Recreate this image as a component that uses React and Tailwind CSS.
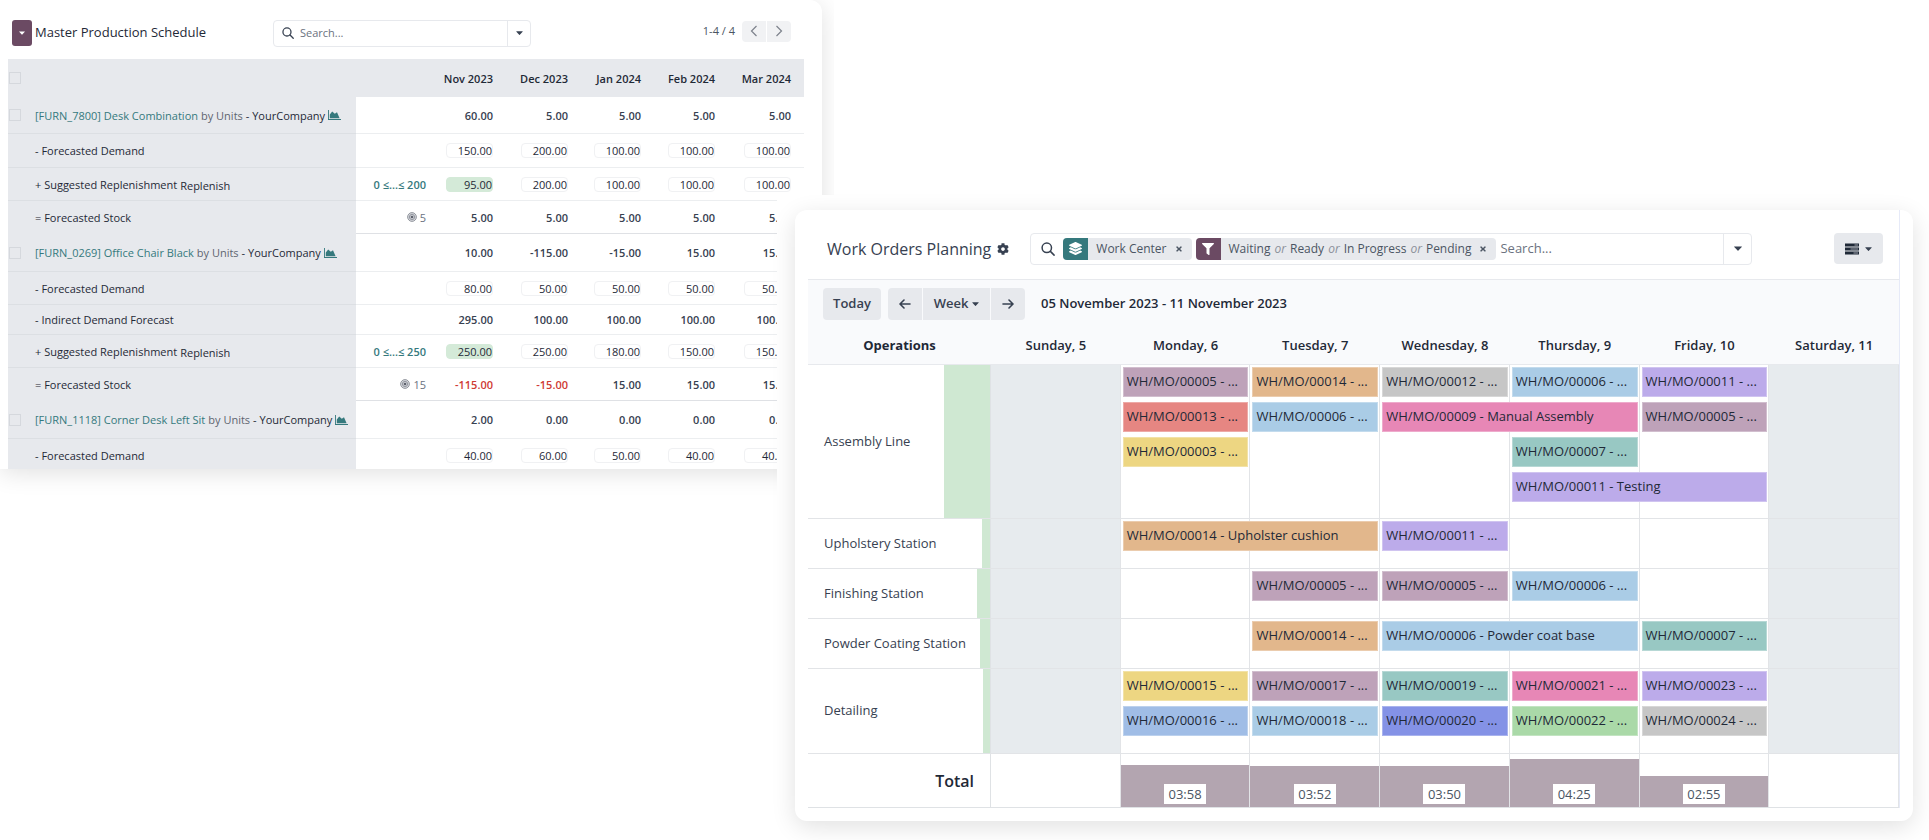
import { useState } from 'react'
import { FaCog, FaFilter, FaTimes, FaLayerGroup } from 'react-icons/fa'

const MONTHS = ['Nov 2023', 'Dec 2023', 'Jan 2024', 'Feb 2024', 'Mar 2024']

// kind: product | input | total
const SCHEDULE = [
  { kind:'product', h:'h-[37px]', name:'[FURN_7800] Desk Combination', values:['60.00','5.00','5.00','5.00','5.00'] },
  { kind:'input', h:'h-[34px]', name:'- Forecasted Demand', values:['150.00','200.00','100.00','100.00','100.00'] },
  { kind:'input', h:'h-[33px]', name:'+ Suggested Replenishment', replenish:true, range:'0 ≤...≤ 200', values:['95.00','200.00','100.00','100.00','100.00'] },
  { kind:'total', h:'h-[33px]', name:'= Forecasted Stock', target:'5', last:true, values:['5.00','5.00','5.00','5.00','5.00'] },
  { kind:'product', h:'h-[38px]', name:'[FURN_0269] Office Chair Black', values:['10.00','-115.00','-15.00','15.00','15.00'] },
  { kind:'input', h:'h-[33px]', name:'- Forecasted Demand', values:['80.00','50.00','50.00','50.00','50.00'] },
  { kind:'total', h:'h-[30px]', name:'- Indirect Demand Forecast', values:['295.00','100.00','100.00','100.00','100.00'] },
  { kind:'input', h:'h-[33px]', name:'+ Suggested Replenishment', replenish:true, range:'0 ≤...≤ 250', values:['250.00','250.00','180.00','150.00','150.00'] },
  { kind:'total', h:'h-[33px]', name:'= Forecasted Stock', target:'15', last:true, values:['-115.00','-15.00','15.00','15.00','15.00'] },
  { kind:'product', h:'h-[38px]', name:'[FURN_1118] Corner Desk Left Sit', values:['2.00','0.00','0.00','0.00','0.00'] },
  { kind:'input', h:'h-[34px]', name:'- Forecasted Demand', values:['40.00','60.00','50.00','40.00','40.00'] },
]

const DAYS = ['Sunday, 5', 'Monday, 6', 'Tuesday, 7', 'Wednesday, 8', 'Thursday, 9', 'Friday, 10', 'Saturday, 11']

const mauve = 'bg-[#bea2b9]', orange = 'bg-[#e2b78c]', gray = 'bg-[#c6c6c6]', sky = 'bg-[#aacce6]', violet = 'bg-[#bcabea]'
const red = 'bg-[#e68682]', pink = 'bg-[#e787b6]', yellow = 'bg-[#edd682]', teal = 'bg-[#98c8c3]', blue = 'bg-[#a0bde6]', indigo = 'bg-[#8492e6]', green = 'bg-[#aad9a8]'

const STATIONS = [
  { name:'Assembly Line', h:'h-[154px]', load:28, tasks:[
    ['WH/MO/00005 - ...', mauve, 'col-start-2 row-start-1'],
    ['WH/MO/00014 - ...', orange, 'col-start-3 row-start-1'],
    ['WH/MO/00012 - ...', gray, 'col-start-4 row-start-1'],
    ['WH/MO/00006 - ...', sky, 'col-start-5 row-start-1'],
    ['WH/MO/00011 - ...', violet, 'col-start-6 row-start-1'],
    ['WH/MO/00013 - ...', red, 'col-start-2 row-start-2'],
    ['WH/MO/00006 - ...', sky, 'col-start-3 row-start-2'],
    ['WH/MO/00009 - Manual Assembly', pink, 'col-start-4 col-span-2 row-start-2'],
    ['WH/MO/00005 - ...', mauve, 'col-start-6 row-start-2'],
    ['WH/MO/00003 - ...', yellow, 'col-start-2 row-start-3'],
    ['WH/MO/00007 - ...', teal, 'col-start-5 row-start-3'],
    ['WH/MO/00011 - Testing', violet, 'col-start-5 col-span-2 row-start-4'],
  ] },
  { name:'Upholstery Station', h:'h-[50px]', load:5, tasks:[
    ['WH/MO/00014 - Upholster cushion', orange, 'col-start-2 col-span-2 row-start-1'],
    ['WH/MO/00011 - ...', violet, 'col-start-4 row-start-1'],
  ] },
  { name:'Finishing Station', h:'h-[50px]', load:8, tasks:[
    ['WH/MO/00005 - ...', mauve, 'col-start-3 row-start-1'],
    ['WH/MO/00005 - ...', mauve, 'col-start-4 row-start-1'],
    ['WH/MO/00006 - ...', sky, 'col-start-5 row-start-1'],
  ] },
  { name:'Powder Coating Station', h:'h-[50px]', load:6, tasks:[
    ['WH/MO/00014 - ...', orange, 'col-start-3 row-start-1'],
    ['WH/MO/00006 - Powder coat base', sky, 'col-start-4 col-span-2 row-start-1'],
    ['WH/MO/00007 - ...', teal, 'col-start-6 row-start-1'],
  ] },
  { name:'Detailing', h:'h-[85px]', load:4, tasks:[
    ['WH/MO/00015 - ...', yellow, 'col-start-2 row-start-1'],
    ['WH/MO/00017 - ...', mauve, 'col-start-3 row-start-1'],
    ['WH/MO/00019 - ...', teal, 'col-start-4 row-start-1'],
    ['WH/MO/00021 - ...', pink, 'col-start-5 row-start-1'],
    ['WH/MO/00023 - ...', violet, 'col-start-6 row-start-1'],
    ['WH/MO/00016 - ...', blue, 'col-start-2 row-start-2'],
    ['WH/MO/00018 - ...', sky, 'col-start-3 row-start-2'],
    ['WH/MO/00020 - ...', indigo, 'col-start-4 row-start-2'],
    ['WH/MO/00022 - ...', green, 'col-start-5 row-start-2'],
    ['WH/MO/00024 - ...', gray, 'col-start-6 row-start-2'],
  ] },
]

const TOTALS = [null, ['03:58', 80], ['03:52', 78], ['03:50', 77], ['04:25', 90], ['02:55', 58], null]

const Caret = ({ className }) => <svg viewBox="0 0 10 6" className={className} fill="currentColor"><path d="M.6.4h8.8a.4.4 0 0 1 .3.7L5.5 5.6a.7.7 0 0 1-1 0L.3 1.1A.4.4 0 0 1 .6.4z" /></svg>
const SearchIcon = ({ className }) => <svg viewBox="0 0 14 14" className={className} fill="none" stroke="currentColor" strokeWidth="1.5" strokeLinecap="round"><circle cx="5.8" cy="5.8" r="4.7" /><path d="M9.4 9.4l3.7 3.7" /></svg>
const Chevron = ({ d }) => <svg viewBox="0 0 8 12" className="h-3 w-2" fill="none" stroke="currentColor" strokeWidth="1.2"><path d={d} /></svg>
const Arrow = ({ d }) => <svg viewBox="0 0 12 10" className="h-[10px] w-3" fill="none" stroke="currentColor" strokeWidth="1.6" strokeLinecap="round" strokeLinejoin="round"><path d={d} /></svg>
const AreaChart = () => <svg viewBox="0 0 13 10" className="h-[10px] w-[13px]" fill="currentColor"><path d="M0 0h.9v9.1H13v.9H0z" /><path d="M1.8 8.3V4.6L4.2 1.5l2.6 2.3 2.2-1.6L11.6 8.3z" /></svg>
const Target = () => <svg viewBox="0 0 10 10" className="h-[10px] w-[10px] shrink-0" fill="none" stroke="#8b8e97"><circle cx="5" cy="5" r="4.4" strokeWidth=".9" fill="#d3d5da" /><circle cx="5" cy="5" r="2.6" strokeWidth=".9" /><circle cx="5" cy="5" r="1.3" fill="#5d616c" stroke="none" /></svg>
const Tasks = () => (
  <svg viewBox="0 0 14 12" className="h-3 w-[14px]" fill="#1f2937">
    <path d="M0 .5h14v3H0zM0 4.5h14v3H0zM0 8.5h14v3H0z" />
    <path fill="#9ca0a9" d="M9.5 1.5H13v1H9.5zM5.5 5.5H13v1H5.5zM8.5 9.5H13v1H8.5z" />
  </svg>
)

function ScheduleRow({ row }) {
  const { kind, h, name, replenish, range, target, last, values } = row
  return (
    <tr className={h}>
      <td className={`bg-[#e7e9ed] pl-px align-middle ${last?'':'border-b border-[#dcdfe3]'}`}>
        {kind==='product' && <input type="checkbox" aria-label={name} className="block h-3 w-3 appearance-none border border-[#d5d8dd]" />}
      </td>
      <th scope="row" className={`bg-[#e7e9ed] text-left font-medium whitespace-nowrap text-[#1f2937] ${last?'':'border-b border-[#dcdfe3]'}`}>
        {kind==='product' ? (
          <span className="flex items-center gap-[3px]">
            <a href="#" className="text-[#35797d]">{name}</a>
            <span className="font-normal text-[#5f6570]">by Units</span>
            <span>- YourCompany</span>
            <a href="#" aria-label="Forecast report" className="text-[#35797d]"><AreaChart /></a>
          </span>
        ) : (
          <span className="flex items-center gap-[3px]">{name}{replenish && <button className="pt-[2px]">Replenish</button>}</span>
        )}
      </th>
      <td className={`border-b pr-[13px] text-right whitespace-nowrap ${last?'border-[#dfe1e5]':'border-[#eceef0]'}`}>
        {range && <button className="font-semibold text-[#35797d]">{range}</button>}
        {target && <span className="flex items-center justify-end gap-[3px] font-medium text-[#6b7280]"><Target />{target}</span>}
      </td>
      {values.map((v, i) => (
        <td key={i} className={`border-b pr-[13px] text-right ${last?'border-[#dfe1e5]':'border-[#eceef0]'}`}>
          {kind==='input'
            ? <input defaultValue={v} aria-label={`${name} ${MONTHS[i]}`} className={`ml-auto block h-[15px] w-[47px] rounded-sm border text-right font-medium text-[#1f2937] ${replenish && i===0?'border-[#d4ead8] bg-[#d4ead8]':'border-[#f0f1f3] bg-white'}`} />
            : <span className={`font-semibold ${target && v.startsWith('-')?'text-[#cf3a34]':'text-[#374151]'}`}>{v}</span>}
        </td>
      ))}
    </tr>
  )
}

function SchedulePanel() {
  return (
    <section className="col-start-1 col-end-3 row-start-1 row-end-3 overflow-hidden pr-3 pb-[10px]">
      <div className="rounded-tr-xl bg-white pr-[18px] pl-2 shadow-[0_4px_24px_rgba(0,0,0,0.12)]">
        <header className="flex h-[59px] items-center pt-[7px] pl-1">
          <button aria-label="Menu" className="flex h-[26px] w-5 items-center justify-center rounded-[3px] bg-[#6b4a63] text-white"><Caret className="h-1 w-[6px]" /></button>
          <h1 className="ml-[3px] w-[238px] text-[13px] whitespace-nowrap text-[#1f2937]">Master Production Schedule</h1>
          <div className="flex h-[27px] w-[258px] items-center rounded border border-[#e7e9ed] pl-2 text-[#374151]">
            <SearchIcon className="h-3 w-3" />
            <input aria-label="Search schedule" placeholder="Search..." className="ml-[6px] min-w-0 flex-1 text-[11px] placeholder:text-[#6b7280]" />
            <button aria-label="Search options" className="flex h-full w-[23px] items-center justify-center border-l border-[#e7e9ed]"><Caret className="h-1 w-[7px]" /></button>
          </div>
          <div className="mr-[13px] mb-1 ml-auto flex items-center">
            <span className="mr-[7px] text-[11px] font-medium text-[#4b5563]">1-4 / 4</span>
            <button aria-label="Previous" className="flex h-[21px] w-6 items-center justify-center rounded-l bg-[#f1f2f4] text-[#7d828c]"><Chevron d="M6.5 1L1.5 6l5 5" /></button>
            <button aria-label="Next" className="ml-px flex h-[21px] w-6 items-center justify-center rounded-r bg-[#f1f2f4] text-[#7d828c]"><Chevron d="M1.5 1l5 5-5 5" /></button>
          </div>
        </header>
        <div className="overflow-hidden">
          <table className="-mb-1 w-full table-fixed border-separate border-spacing-0 text-[11px] leading-[13px]">
            <colgroup>
              <col className="w-[27px]" /><col className="w-[321px]" /><col className="w-[83px]" /><col className="w-[67px]" />
              <col className="w-[75px]" /><col className="w-[73px]" /><col className="w-[74px]" /><col className="w-[76px]" />
            </colgroup>
            <thead>
              <tr className="h-[38px] bg-[#e7e9ed] text-[#1f2937]">
                <td className="pl-px"><input type="checkbox" aria-label="Select all" className="block h-3 w-3 appearance-none border border-[#d5d8dd]" /></td>
                <td /><td />
                {MONTHS.map(m => <th key={m} scope="col" className="pr-[13px] text-right font-semibold whitespace-nowrap">{m}</th>)}
              </tr>
            </thead>
            <tbody>{SCHEDULE.map((row, i) => <ScheduleRow key={i} row={row} />)}</tbody>
          </table>
        </div>
      </div>
    </section>
  )
}

function Chip({ icon, color, children }) {
  return (
    <div className="flex h-[22px] shrink-0 items-center overflow-hidden rounded bg-[#e7e9ed] text-xs font-medium whitespace-nowrap text-[#4b5563]">
      <span className={`flex h-full w-[25px] items-center justify-center text-white ${color}`}>{icon}</span>
      <span className="flex gap-1 px-2">{children}</span>
      <button aria-label="Remove" className="pr-[9px]"><FaTimes size={8} /></button>
    </div>
  )
}

const Or = () => <i className="font-normal text-[#8b909a]">or</i>

function StationRow({ station }) {
  return (
    <div className={`flex border-b border-[#e2e4e7] ${station.h}`}>
      <div className="flex w-[183px] shrink-0 items-center justify-between border-r border-[#dfe2e5] pl-4 font-medium whitespace-nowrap text-[#374151]">
        <span className="w-0">{station.name}</span>
        <div className="h-full bg-[#cfe8d2]" style={{ width:`${station.load}%` }} />
      </div>
      <div className="grid flex-1">
        <div className="col-start-1 row-start-1 grid grid-cols-7">
          {DAYS.map((d, i) => <div key={d} className={`border-r border-[#e2e4e7] ${i===0||i===6?'bg-[#e7ebee]':''}`} />)}
        </div>
        <div className="col-start-1 row-start-1 grid auto-rows-[30px] grid-cols-7 gap-y-[5px] pt-[2px]">
          {station.tasks.map(([label, color, place]) => (
            <button key={place} className={`mr-[2px] ml-[2px] truncate border border-white/30 px-[3px] text-left font-medium text-[#1f2937] ${color} ${place}`}>{label}</button>
          ))}
        </div>
      </div>
    </div>
  )
}

function PlanningPanel({ scale, setScale }) {
  return (
    <section className="col-start-2 col-end-4 row-start-2 row-end-4 bg-white pt-[15px] pr-4 pb-5 pl-[18px]">
      <div className="rounded-xl bg-white px-[13px] pb-[13px] text-[13px] shadow-[0_6px_24px_rgba(0,0,0,0.12)]">
        <div className="border-r border-[#e6eaf8]">
          <header className="flex h-[69px] items-center pt-2 pr-4 pl-[19px]">
            <h2 className="text-base whitespace-nowrap text-[#374151]">Work Orders Planning</h2>
            <button aria-label="Settings" className="ml-[6px] text-[#374151]"><FaCog size={12} /></button>
            <div className="ml-[21px] flex h-8 w-[722px] items-center gap-1 rounded border border-[#e7e9ed] pl-[10px] text-[#374151]">
              <SearchIcon className="mr-1 h-[14px] w-[14px]" />
              <Chip icon={<FaLayerGroup size={13} />} color="bg-[#35797d]">Work Center</Chip>
              <Chip icon={<FaFilter size={12} />} color="bg-[#6b4a63]">
                Waiting <Or /> Ready <Or /> In Progress <Or /> Pending
              </Chip>
              <input aria-label="Search work orders" placeholder="Search..." className="min-w-0 flex-1 placeholder:text-[#6b7280]" />
              <button aria-label="Search options" className="flex h-full w-7 items-center justify-center border-l border-[#e7e9ed]"><Caret className="h-[5px] w-2" /></button>
            </div>
            <button aria-label="View options" className="ml-auto flex h-[31px] w-[49px] items-center justify-center gap-[6px] rounded bg-[#e7e9ed] text-[#374151]"><Tasks /><Caret className="h-1 w-[7px]" /></button>
          </header>
          <div className="border-y border-[#e7e9ed] bg-[#f9fafc]">
            <div className="flex h-[48px] items-center pl-[15px] text-[#374151]">
              <button className="mr-[7px] h-8 w-[58px] rounded bg-[#e7e9ed] font-semibold">Today</button>
              <div className="flex h-8 gap-px">
                <button aria-label="Previous week" className="flex w-[34px] items-center justify-center rounded-l bg-[#e7e9ed]"><Arrow d="M11 5H1.5M5 1L1 5l4 4" /></button>
                <button onClick={() => setScale(scale==='Week'?'Day':'Week')} className="flex w-[67px] items-center justify-center gap-1 bg-[#e7e9ed] font-semibold">{scale}<Caret className="h-1 w-[7px]" /></button>
                <button aria-label="Next week" className="flex w-[34px] items-center justify-center rounded-r bg-[#e7e9ed]"><Arrow d="M1 5h9.5M7 1l4 4-4 4" /></button>
              </div>
              <strong className="ml-4 font-semibold text-[#1f2937]">05 November 2023 - 11 November 2023</strong>
            </div>
            <div className="flex h-9 items-center text-center font-semibold text-[#1f2937]">
              <div className="w-[183px] shrink-0 font-bold">Operations</div>
              <div className="grid flex-1 grid-cols-7">{DAYS.map(d => <div key={d}>{d}</div>)}</div>
            </div>
          </div>
          {STATIONS.map(s => <StationRow key={s.name} station={s} />)}
          <div className="flex h-[54px] border-b border-[#dfe2e5]">
            <div className="flex w-[183px] shrink-0 items-center justify-end border-r border-[#dfe2e5] pr-4 text-base font-semibold text-[#1f2937]">Total</div>
            <div className="grid flex-1 grid-cols-7">
              {TOTALS.map((t, i) => (
                <div key={i} className="flex items-end border-r border-[#e2e4e7]">
                  {t && (
                    <div className="flex w-full items-end justify-center bg-[#b3a5b0] pb-[3px]" style={{ height:`${t[1]}%` }}>
                      <span className="h-5 w-[42px] bg-white text-center leading-5 font-medium text-[#4b5563]">{t[0]}</span>
                    </div>
                  )}
                </div>
              ))}
            </div>
          </div>
        </div>
      </div>
    </section>
  )
}

export default function App() {
  const [scale, setScale] = useState('Week')
  return (
    <main className="grid grid-cols-[minmax(0,777fr)_minmax(0,57fr)_minmax(0,1095fr)] grid-rows-[195px_auto_auto] bg-white font-['Open_Sans',sans-serif]">
      <SchedulePanel />
      <PlanningPanel scale={scale} setScale={setScale} />
    </main>
  )
}
